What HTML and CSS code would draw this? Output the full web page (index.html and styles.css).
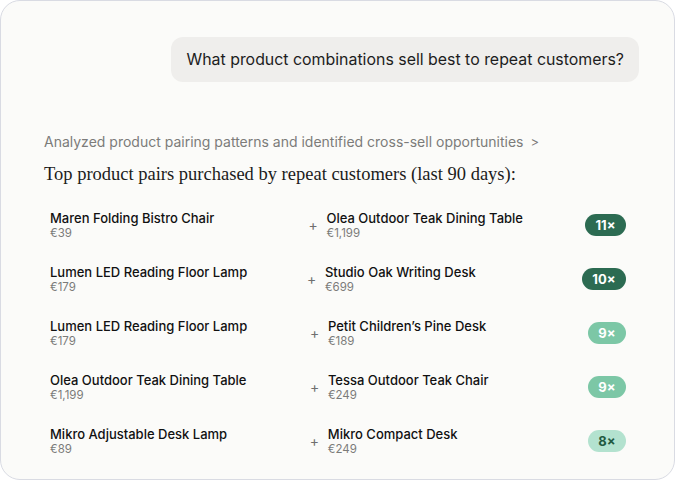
FILE: index.html
```html
<!DOCTYPE html>
<html>
<head>
<meta charset="utf-8">
<link rel="stylesheet" href="styles.css">
</head>
<body>
<div class="card">
  <div class="user-row">
    <div class="bubble">What product combinations sell best to repeat customers?</div>
  </div>
  <div class="analysis">Analyzed product pairing patterns and identified cross-sell opportunities <span class="chev">&gt;</span></div>
  <h2 class="heading">Top product pairs purchased by repeat customers (last 90 days):</h2>
  <div class="pairs">
    <div class="pair">
      <div class="item"><div class="name">Maren Folding Bistro Chair</div><div class="price">€39</div></div>
      <div class="plus">+</div>
      <div class="item"><div class="name">Olea Outdoor Teak Dining Table</div><div class="price">€1,199</div></div>
      <div class="badge b-dark">11×</div>
    </div>
    <div class="pair">
      <div class="item"><div class="name">Lumen LED Reading Floor Lamp</div><div class="price">€179</div></div>
      <div class="plus">+</div>
      <div class="item"><div class="name">Studio Oak Writing Desk</div><div class="price">€699</div></div>
      <div class="badge b-dark">10×</div>
    </div>
    <div class="pair">
      <div class="item"><div class="name">Lumen LED Reading Floor Lamp</div><div class="price">€179</div></div>
      <div class="plus">+</div>
      <div class="item"><div class="name">Petit Children’s Pine Desk</div><div class="price">€189</div></div>
      <div class="badge b-mid">9×</div>
    </div>
    <div class="pair">
      <div class="item"><div class="name">Olea Outdoor Teak Dining Table</div><div class="price">€1,199</div></div>
      <div class="plus">+</div>
      <div class="item"><div class="name">Tessa Outdoor Teak Chair</div><div class="price">€249</div></div>
      <div class="badge b-mid">9×</div>
    </div>
    <div class="pair">
      <div class="item"><div class="name">Mikro Adjustable Desk Lamp</div><div class="price">€89</div></div>
      <div class="plus">+</div>
      <div class="item"><div class="name">Mikro Compact Desk</div><div class="price">€249</div></div>
      <div class="badge b-light">8×</div>
    </div>
  </div>
</div>
</body>
</html>
```
FILE: styles.css
```css
* { box-sizing: border-box; }
html, body { margin: 0; padding: 0; background: #ffffff; }
body { font-family: Inter, "Noto Sans", sans-serif; color: #1b1b1b; }
.card {
  width: 675px;
  height: 480px;
  background: #fbfbf9;
  border: 1px solid #d9dbe3;
  border-radius: 20px;
  padding: 36px 35px 0 43px;
  overflow: hidden;
}
.user-row { display: flex; justify-content: flex-end; }
.bubble {
  background: #efeeec;
  border-radius: 12px;
  padding: 13px 15px 12px 16px;
  font-size: 15.9px;
  line-height: 20px;
  color: #1d1d1d;
}
.analysis {
  margin-top: 50px;
  font-size: 14px;
  line-height: 20px;
  color: #7c7c7a;
}
.chev { margin-left: 3px; font-size: 13px; }
.heading {
  margin: 10px 0 0 0;
  font-family: "Liberation Serif", serif;
  font-weight: 400;
  font-size: 18.5px;
  line-height: 24px;
  color: #1b1b1b;
}
.pairs { margin-top: 12px; padding-left: 6px; padding-right: 13px; display: flex; flex-direction: column; }
.pair { display: flex; align-items: center; gap: 12px; height: 54px; }
.item { flex: 1 1 0; min-width: 0; }
.name { font-size: 13px; line-height: 16px; font-weight: 500; color: #111111; white-space: nowrap; }
.price { font-size: 11.5px; line-height: 15px; color: #7b7b79; }
.plus { width: 6px; font-size: 14px; color: #6f6f6f; text-align: center; line-height: 14px; }
.badge {
  height: 22px;
  border-radius: 11px;
  padding: 0 10.5px;
  font-size: 13px;
  font-weight: 700;
  line-height: 22px;
  text-align: center;
}
.b-dark { background: #2c6b52; color: #ffffff; }
.b-mid { background: #7cc7a6; color: #ffffff; }
.b-light { background: #b3e2cf; color: #1f5a41; }
```
